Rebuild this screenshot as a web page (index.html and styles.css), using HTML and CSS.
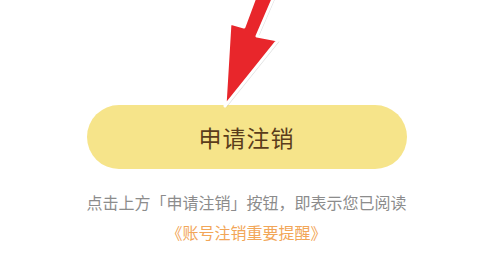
FILE: index.html
```html
<!DOCTYPE html>
<html lang="zh-Hans">
<head>
  <meta charset="UTF-8">
  <meta name="viewport" content="width=device-width, initial-scale=1.0">
  <title>申请注销</title>
  <link rel="stylesheet" href="styles.css">
</head>
<body>
  <div class="page">
    <div class="action">
      <div class="apply-btn">申请注销</div>
      <!-- 指示箭头 -->
      <svg class="arrow" width="80" height="115" viewBox="210 -5 80 115">
        <polygon points="259,-8 278,-8 259,36 280,40 227,106 232,23 246,27"
                 fill="#9a9a9a" opacity="0.35" transform="translate(1.5,1.5)"/>
        <polygon points="259,-8 278,-8 259,36 280,40 227,106 232,23 246,27"
                 fill="#e8262b" stroke="#ffffff" stroke-width="3" stroke-linejoin="round"/>
      </svg>
    </div>
    <div class="notice first">点击上方「申请注销」按钮，即表示您已阅读</div>
    <div class="notice link">《账号注销重要提醒》</div>
  </div>
</body>
</html>
```

FILE: styles.css
```css
body {
  margin: 0;
  padding: 0;
  background-color: #ffffff;
  font-family: "Noto Sans CJK SC", "Noto Sans", sans-serif;
}

.page {
  width: 493px;
  height: 253px;
  overflow: hidden;
  display: flex;
  flex-direction: column;
  align-items: center;
  padding-top: 105px;
  box-sizing: border-box;
}

.action {
  position: relative;
}

.apply-btn {
  width: 320px;
  height: 64px;
  border-radius: 32px;
  background-color: #f6e48a;
  color: #5a3c1b;
  font-size: 23px;
  letter-spacing: 1px;
  display: flex;
  align-items: center;
  justify-content: center;
}

.arrow {
  position: absolute;
  left: 121px;
  top: -110px;
}

.notice {
  font-size: 16px;
  line-height: 30px;
  color: #8c8c8c;
}

.notice.first {
  margin-top: 18px;
}

.link {
  color: #f2a658;
}
```
